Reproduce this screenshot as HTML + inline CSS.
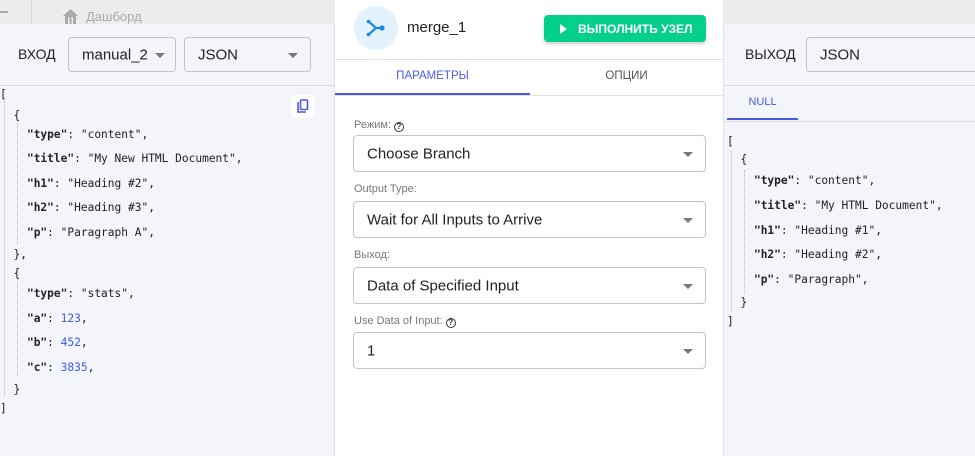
<!DOCTYPE html>
<html><head><meta charset="utf-8"><style>
*{box-sizing:border-box;margin:0;padding:0}
body{width:975px;height:456px;overflow:hidden;position:relative;background:#eaeaea;font-family:"Liberation Sans",sans-serif;color:#222}
.a{position:absolute}
.top{left:0;top:0;width:975px;height:24px;background:#ececec}
.lp{left:0;top:24px;width:335px;height:432px;background:#f4f5fa;border-right:1px solid #e0e0e0}
.rp{left:723px;top:24px;width:252px;height:432px;background:#f4f5fa;border-left:1px solid #e2e2e2}
.cp{left:335px;top:0;width:388px;height:456px;background:#fff}
.sel{position:absolute;border:1px solid #c4c4c4;border-radius:4px;background:transparent;font-size:15px;color:#222}
.sel span{position:absolute;left:13px;top:50%;transform:translateY(-50%)}
.car{position:absolute;right:12px;top:50%;margin-top:-2px;width:0;height:0;border-left:5px solid transparent;border-right:5px solid transparent;border-top:5px solid #777}
.mono{font-family:"DejaVu Sans Mono","Liberation Mono",monospace;font-size:11.2px;color:#222;white-space:pre}
.k{font-weight:bold}
.n{color:#3a5bf0}
.lbl{position:absolute;left:354px;font-size:11px;color:#777}
.q{display:inline-block;width:10px;height:10px;border:1.3px solid #333;border-radius:50%;font-size:8px;line-height:8px;text-align:center;color:#333;font-weight:bold;vertical-align:-1px;margin-left:3px}
.guide{position:absolute;border-left:1px dotted #bbb}
</style></head><body>
<div class="a top"></div>
<div class="a" style="left:31px;top:0;width:1px;height:24px;background:#ddd"></div>
<div class="a" style="left:0;top:11px;width:8px;height:1.5px;background:#aaa"></div>
<svg class="a" style="left:62px;top:8px" width="17" height="16" viewBox="0 0 17 16"><path d="M8.5 1L1 8h2v8h11V8h2z" fill="#aaa"/><rect x="6" y="9" width="1.5" height="7" fill="#ececec"/><rect x="9.5" y="9" width="1.5" height="7" fill="#ececec"/></svg>
<div class="a" style="left:86px;top:9px;font-size:13px;color:#aaa">Дашборд</div>

<div class="a lp"></div>
<div class="a" style="left:18px;top:46px;font-size:14px;color:#222">ВХОД</div>
<div class="sel" style="left:68px;top:37px;width:108px;height:35px"><span>manual_2</span><div class="car" style="right:10px"></div></div>
<div class="sel" style="left:184px;top:37px;width:127px;height:35px"><span>JSON</span><div class="car"></div></div>
<div class="a" style="left:0;top:85px;width:334px;height:1px;background:#dcdcdc"></div>
<div class="a" style="left:291px;top:95px;width:24px;height:23px;background:#fff;border-radius:4px"></div>
<svg class="a" style="left:296px;top:99px" width="14" height="15" viewBox="0 0 14 15"><path d="M2 3v10h8" fill="none" stroke="#4a5ae8" stroke-width="1.6"/><rect x="4.5" y="1" width="7" height="9.5" rx="1" fill="none" stroke="#4a5ae8" stroke-width="1.6"/></svg>
<div class="guide" style="left:4px;top:101px;height:296px"></div>
<div class="guide" style="left:17px;top:120px;height:124px"></div>
<div class="guide" style="left:17px;top:278px;height:98px"></div>
<div class="a mono" style="left:0;top:83px;line-height:24.5px"><div>[</div><div style="line-height:15px">  {</div><div>    <span class="k">"type"</span>: "content",</div><div>    <span class="k">"title"</span>: "My New HTML Document",</div><div>    <span class="k">"h1"</span>: "Heading #2",</div><div>    <span class="k">"h2"</span>: "Heading #3",</div><div>    <span class="k">"p"</span>: "Paragraph A",</div><div style="line-height:20px">  },</div><div style="line-height:17px">  {</div><div>    <span class="k">"type"</span>: "stats",</div><div>    <span class="k">"a"</span>: <span class="n">123</span>,</div><div>    <span class="k">"b"</span>: <span class="n">452</span>,</div><div>    <span class="k">"c"</span>: <span class="n">3835</span>,</div><div style="line-height:20px">  }</div><div style="line-height:18px">]</div></div>

<div class="a cp"></div>
<div class="a" style="left:354px;top:6px;width:44px;height:44px;border-radius:50%;background:#e3f2fd"></div>
<svg class="a" style="left:366px;top:19px" width="20" height="18" viewBox="0 0 20 18"><path d="M2 2l8 7M2 16l8-7M10 9h5" stroke="#1e88e5" stroke-width="2.2" fill="none" stroke-linecap="round"/><circle cx="16" cy="9" r="2.6" fill="#1e88e5"/><circle cx="2.5" cy="2.5" r="1.8" fill="#1e88e5"/><circle cx="2.5" cy="15.5" r="1.8" fill="#1e88e5"/></svg>
<div class="a" style="left:407px;top:19px;font-size:15px;color:#222">merge_1</div>
<div class="a" style="left:544px;top:15px;width:162px;height:27px;background:#05d08b;border-radius:4px;box-shadow:0 2px 3px rgba(0,0,0,.2)"></div>
<div class="a" style="left:560px;top:24px;width:0;height:0;border-top:5px solid transparent;border-bottom:5px solid transparent;border-left:7px solid #fff"></div>
<div class="a" style="left:578px;top:22px;font-size:12px;font-weight:bold;color:#fff">ВЫПОЛНИТЬ УЗЕЛ</div>
<div class="a" style="left:335px;top:59px;width:388px;height:1px;background:#e0e0e0"></div>
<div class="a" style="left:335px;top:70px;width:195px;text-align:center;font-size:11.5px;color:#4a5ae8">ПАРАМЕТРЫ</div>
<div class="a" style="left:530px;top:70px;width:193px;text-align:center;font-size:11.5px;color:#555">ОПЦИИ</div>
<div class="a" style="left:335px;top:95px;width:388px;height:1px;background:#e0e0e0"></div>
<div class="a" style="left:335px;top:93px;width:195px;height:2px;background:#4a5ae8"></div>

<div class="lbl" style="top:119px">Режим:<span class="q">?</span></div>
<div class="sel" style="left:353px;top:135px;width:353px;height:37px"><span>Choose Branch</span><div class="car"></div></div>
<div class="lbl" style="top:183px">Output Type:</div>
<div class="sel" style="left:353px;top:201px;width:353px;height:37px"><span>Wait for All Inputs to Arrive</span><div class="car"></div></div>
<div class="lbl" style="top:249px">Выход:</div>
<div class="sel" style="left:353px;top:267px;width:353px;height:37px"><span>Data of Specified Input</span><div class="car"></div></div>
<div class="lbl" style="top:315px">Use Data of Input:<span class="q">?</span></div>
<div class="sel" style="left:353px;top:332px;width:353px;height:37px"><span>1</span><div class="car"></div></div>

<div class="a rp"></div>
<div class="a" style="left:745px;top:46px;font-size:14px;color:#222">ВЫХОД</div>
<div class="sel" style="left:806px;top:37px;width:190px;height:35px"><span>JSON</span></div>
<div class="a" style="left:724px;top:85px;width:251px;height:1px;background:#dcdcdc"></div>
<div class="a" style="left:727px;top:96px;width:71px;text-align:center;font-size:11px;color:#4a5ae8">NULL</div>
<div class="a" style="left:727px;top:118px;width:71px;height:2px;background:#4a5ae8"></div>
<div class="a" style="left:724px;top:121px;width:251px;height:1px;background:#dcdcdc"></div>
<div class="guide" style="left:731px;top:151px;height:160px"></div>
<div class="guide" style="left:744px;top:170px;height:124px"></div>
<div class="a mono" style="left:727px;top:133px;line-height:24.8px"><div style="line-height:18px">[</div><div style="line-height:18px">  {</div><div>    <span class="k">"type"</span>: "content",</div><div>    <span class="k">"title"</span>: "My HTML Document",</div><div>    <span class="k">"h1"</span>: "Heading #1",</div><div>    <span class="k">"h2"</span>: "Heading #2",</div><div>    <span class="k">"p"</span>: "Paragraph",</div><div style="line-height:20px">  }</div><div style="line-height:18px">]</div></div>
</body></html>
